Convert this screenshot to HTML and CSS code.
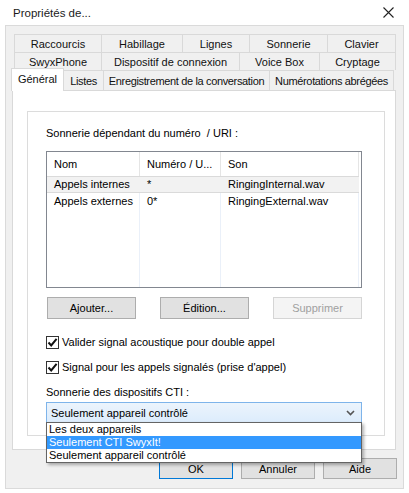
FILE: index.html
```html
<!DOCTYPE html>
<html lang="fr">

<head>
  <meta charset="UTF-8">
  <title>Propriétés de...</title>
  <link rel="stylesheet" href="styles.css">
</head>

<body>
  <div class="window">
    <div class="titlebar">
      <span class="title">Propriétés de...</span>
      <svg class="close" width="11" height="11" viewBox="0 0 11 11">
        <path d="M0.5 0.5 L10.5 10.5 M10.5 0.5 L0.5 10.5" stroke="#222" stroke-width="1.1" fill="none" />
      </svg>
    </div>

    <div class="client">
      <div class="tabs">
        <div class="tab-row back">
          <div class="tab" style="width:87px">Raccourcis</div>
          <div class="tab" style="width:81px">Habillage</div>
          <div class="tab" style="width:67px">Lignes</div>
          <div class="tab" style="width:78px">Sonnerie</div>
          <div class="tab last" style="width:69px">Clavier</div>
        </div>
        <div class="tab-row back">
          <div class="tab" style="width:87px">SwyxPhone</div>
          <div class="tab" style="width:138px">Dispositif de connexion</div>
          <div class="tab" style="width:80px">Voice Box</div>
          <div class="tab last" style="width:77px">Cryptage</div>
        </div>
        <div class="tab-row front">
          <div class="tab active" style="width:53px">Général</div>
          <div class="tab" style="width:40px">Listes</div>
          <div class="tab" style="width:166px">Enregistrement de la conversation</div>
          <div class="tab last" style="width:125px">Numérotations abrégées</div>
        </div>
      </div>

      <div class="panel">
        <div class="group">
          <div class="label">Sonnerie dépendant du numéro&nbsp; / URI :</div>

          <div class="listview">
            <div class="lv-col" style="width:93px">
              <div class="lv-head">Nom</div>
              <div class="lv-cell sel">Appels internes</div>
              <div class="lv-cell">Appels externes</div>
            </div>
            <div class="lv-col" style="width:81px">
              <div class="lv-head">Numéro / U...</div>
              <div class="lv-cell sel">*</div>
              <div class="lv-cell">0*</div>
            </div>
            <div class="lv-col" style="width:138px">
              <div class="lv-head">Son</div>
              <div class="lv-cell sel">RingingInternal.wav</div>
              <div class="lv-cell">RingingExternal.wav</div>
            </div>
          </div>

          <div class="list-buttons">
            <button class="btn">Ajouter...</button>
            <button class="btn">Édition...</button>
            <button class="btn disabled">Supprimer</button>
          </div>

          <div class="check first">
            <span class="box">
              <svg width="11" height="11" viewBox="0 0 11 11">
                <path d="M1.5 5.5 L4.2 8.4 L9.6 1.8" stroke="#111" stroke-width="2" fill="none" />
              </svg>
            </span>
            <span>Valider signal acoustique pour double appel</span>
          </div>
          <div class="check">
            <span class="box">
              <svg width="11" height="11" viewBox="0 0 11 11">
                <path d="M1.5 5.5 L4.2 8.4 L9.6 1.8" stroke="#111" stroke-width="2" fill="none" />
              </svg>
            </span>
            <span>Signal pour les appels signalés (prise d'appel)</span>
          </div>

          <div class="label cti">Sonnerie des dispositifs CTI :</div>

          <div class="combo-wrap">
            <div class="combo">
              <span>Seulement appareil contrôlé</span>
              <svg class="chevron" width="9" height="6" viewBox="0 0 9 6">
                <path d="M1 1 L4.5 4.5 L8 1" stroke="#555" stroke-width="1.6" fill="none" />
              </svg>
            </div>
            <div class="dropdown">
              <div class="option">Les deux appareils</div>
              <div class="option hl">Seulement CTI SwyxIt!</div>
              <div class="option">Seulement appareil contrôlé</div>
            </div>
          </div>
        </div>
      </div>

      <div class="dialog-buttons">
        <button class="btn default">OK</button>
        <button class="btn">Annuler</button>
        <button class="btn">Aide</button>
      </div>
    </div>
  </div>
</body>

</html>
```

FILE: styles.css
```css
body,
html {
  margin: 0;
  padding: 0;
  background-color: #ffffff;
  font-family: "Liberation Sans", Arial, sans-serif;
  font-size: 11px;
  color: #000000;
}

.window {
  width: 409px;
  height: 493px;
  overflow: hidden;
}

.titlebar {
  height: 25px;
  display: flex;
  align-items: center;
  padding-left: 13px;
  padding-right: 15px;
  background-color: #ffffff;
}

.title {
  font-size: 11.5px;
  color: #1a1a1a;
  flex: 1;
}

.close {
  display: block;
  margin-top: -1px;
}

.client {
  margin-left: 5px;
  width: 399px;
  height: 464px;
  box-sizing: border-box;
  border: 1px solid #dadada;
  background-color: #f0f0f0;
  padding-top: 8px;
}

/* tabs */

.tab-row {
  display: flex;
}

.tab-row.back {
  margin-left: 8px;
  height: 18px;
}

.tab-row.front {
  margin-left: 5px;
  height: 20px;
  align-items: flex-end;
}

.tab {
  box-sizing: border-box;
  height: 18px;
  border-top: 1px solid #d9d9d9;
  border-left: 1px solid #d9d9d9;
  background-color: #f0f0f0;
  display: flex;
  align-items: center;
  justify-content: center;
  white-space: nowrap;
  font-size: 11px;
  color: #111111;
}

.tab.last {
  border-right: 1px solid #d9d9d9;
}

.front .tab {
  height: 20px;
  letter-spacing: -0.35px;
}

.front .tab.active {
  height: 23px;
  margin-bottom: -1px;
  position: relative;
  z-index: 2;
  background-color: #ffffff;
  border-right: 1px solid #d9d9d9;
  margin-right: -1px;
  padding-bottom: 2px;
  letter-spacing: 0;
}

.panel {
  position: relative;
  margin-left: 6px;
  width: 384px;
  height: 360px;
  box-sizing: border-box;
  border: 1px solid #d9d9d9;
  background-color: #ffffff;
  padding-top: 20px;
  padding-left: 14px;
}

.group {
  width: 358px;
  height: 325px;
  box-sizing: border-box;
  border: 1px solid #dcdcdc;
  padding: 14px 0 0 18px;
}

.label {
  line-height: 15px;
  height: 15px;
}

/* list view */

.listview {
  margin-top: 10px;
  width: 316px;
  height: 137px;
  box-sizing: border-box;
  border: 1px solid #828790;
  display: flex;
  background-color: #ffffff;
}

.lv-col {
  box-sizing: border-box;
  border-right: 1px solid #eaf0f9;
}

.lv-head {
  height: 24px;
  line-height: 24px;
  padding-left: 7px;
  margin-right: -1px;
  border-right: 1px solid #e5e5e5;
  white-space: nowrap;
}

.lv-cell {
  height: 17px;
  line-height: 17px;
  padding-left: 7px;
  white-space: nowrap;
  overflow: hidden;
}

.lv-cell.sel {
  height: 15px;
  line-height: 15px;
  background-color: #f2f2f2;
  border-top: 1px solid #dadada;
  border-bottom: 1px solid #dadada;
  margin-right: -1px;
}

/* buttons */

.btn {
  box-sizing: border-box;
  width: 89px;
  height: 22px;
  padding: 0;
  background-color: #e1e1e1;
  border: 1px solid #adadad;
  font-family: "Liberation Sans", Arial, sans-serif;
  font-size: 11px;
  color: #000000;
}

.btn.disabled {
  background-color: #f4f4f4;
  border-color: #d5d5d5;
  color: #a0a0a0;
}

.btn.default {
  border-color: #0078d7;
}

.list-buttons {
  display: flex;
  gap: 24px;
  margin-top: 9px;
  margin-left: 1px;
}

/* checkboxes */

.check {
  display: flex;
  align-items: center;
  height: 16px;
  gap: 3px;
  margin-top: 9px;
}

.check.first {
  margin-top: 15px;
}

.box {
  box-sizing: border-box;
  width: 13px;
  height: 13px;
  border: 1px solid #333333;
  display: flex;
  align-items: center;
  justify-content: center;
  background-color: #ffffff;
}

.label.cti {
  margin-top: 10px;
}

/* combo */

.combo-wrap {
  position: relative;
  margin-top: 2px;
  width: 316px;
}

.combo {
  box-sizing: border-box;
  height: 21px;
  border: 1px solid #7eb4ea;
  background: linear-gradient(#ecf4fc, #dcecfc);
  display: flex;
  align-items: center;
  justify-content: space-between;
  padding: 0 6px 0 4px;
  font-size: 11px;
}

.dropdown {
  position: absolute;
  top: 20px;
  left: 0;
  width: 316px;
  box-sizing: border-box;
  border: 1px solid #646464;
  background-color: #ffffff;
  box-shadow: 2px 2px 3px rgba(0, 0, 0, 0.3);
  z-index: 10;
  font-size: 11px;
}

.option {
  height: 13px;
  line-height: 13px;
  padding-left: 2px;
}

.option.hl {
  background-color: #3399ff;
  color: #ffffff;
}

.dialog-buttons {
  display: flex;
  justify-content: flex-end;
  gap: 8px;
  margin-top: 8px;
  padding-right: 6px;
}

.dialog-buttons .btn {
  width: 74px;
  height: 21px;
}
```
